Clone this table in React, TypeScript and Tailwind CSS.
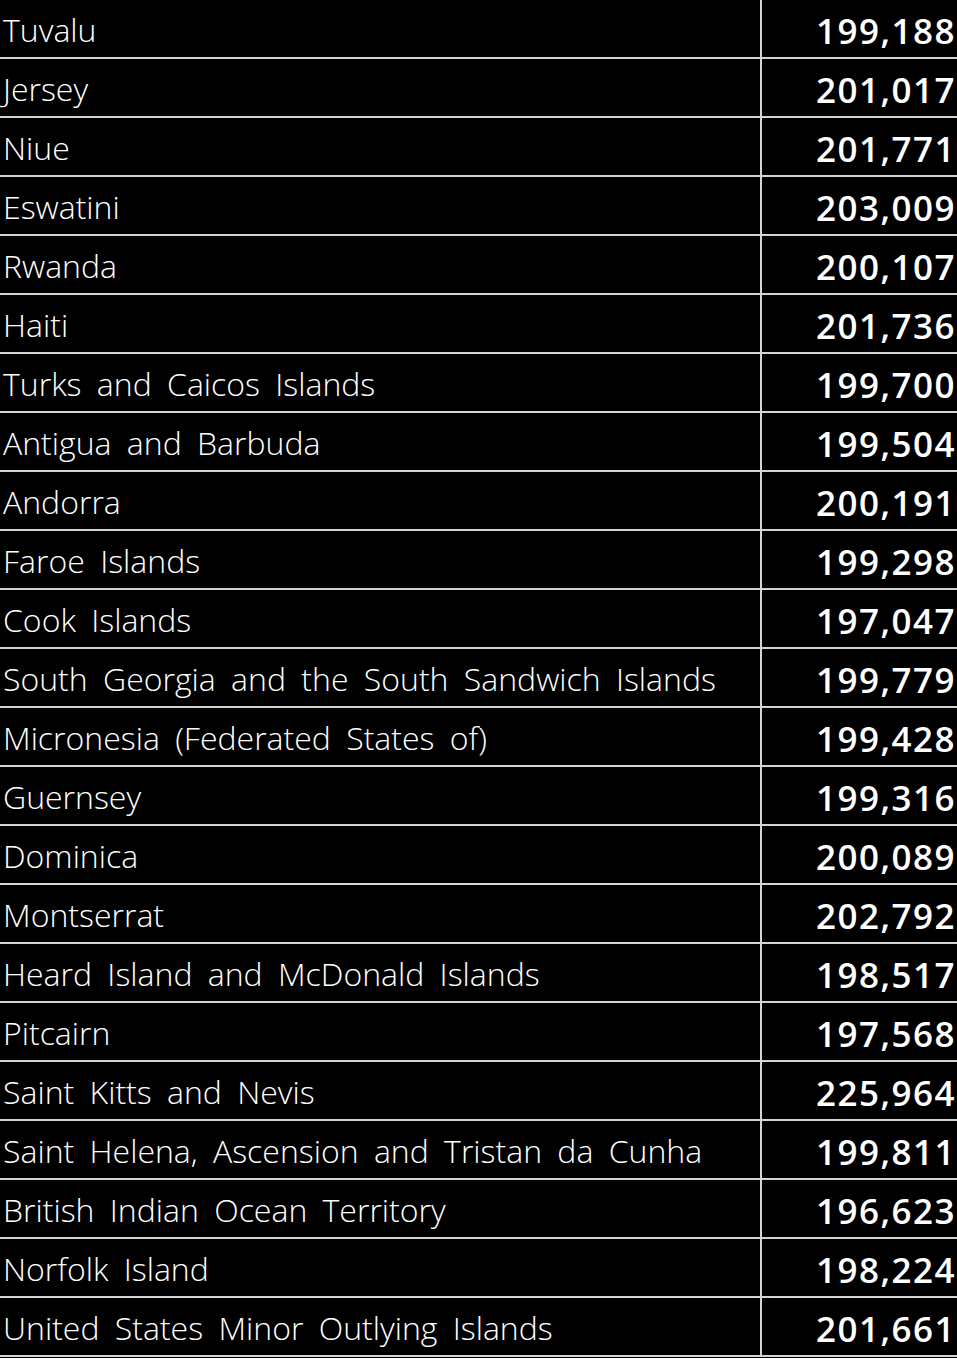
const rows: [string, string][] = [
  ["Tuvalu", "199,188"],
  ["Jersey", "201,017"],
  ["Niue", "201,771"],
  ["Eswatini", "203,009"],
  ["Rwanda", "200,107"],
  ["Haiti", "201,736"],
  ["Turks and Caicos Islands", "199,700"],
  ["Antigua and Barbuda", "199,504"],
  ["Andorra", "200,191"],
  ["Faroe Islands", "199,298"],
  ["Cook Islands", "197,047"],
  ["South Georgia and the South Sandwich Islands", "199,779"],
  ["Micronesia (Federated States of)", "199,428"],
  ["Guernsey", "199,316"],
  ["Dominica", "200,089"],
  ["Montserrat", "202,792"],
  ["Heard Island and McDonald Islands", "198,517"],
  ["Pitcairn", "197,568"],
  ["Saint Kitts and Nevis", "225,964"],
  ["Saint Helena, Ascension and Tristan da Cunha", "199,811"],
  ["British Indian Ocean Territory", "196,623"],
  ["Norfolk Island", "198,224"],
  ["United States Minor Outlying Islands", "201,661"],
];

export default function App() {
  return (
    <div className="w-[957px] h-[1358px] bg-black overflow-hidden text-white font-['Open_Sans',sans-serif]">
      {rows.map(([name, value]) => (
        <div key={name} className="flex h-[59px] border-b-2 border-[#d4d4d4]">
          <div className="w-[760px] pl-[3px] pt-[3px] flex items-center text-[32px] font-[350] leading-none [word-spacing:7px] whitespace-nowrap">
            {name}
          </div>
          <div className="flex-1 border-l-2 border-[#d4d4d4] pr-[1px] pt-[3px] flex items-center justify-end text-[35px] font-[650] tracking-[1.5px] leading-none">
            {value}
          </div>
        </div>
      ))}
    </div>
  );
}
